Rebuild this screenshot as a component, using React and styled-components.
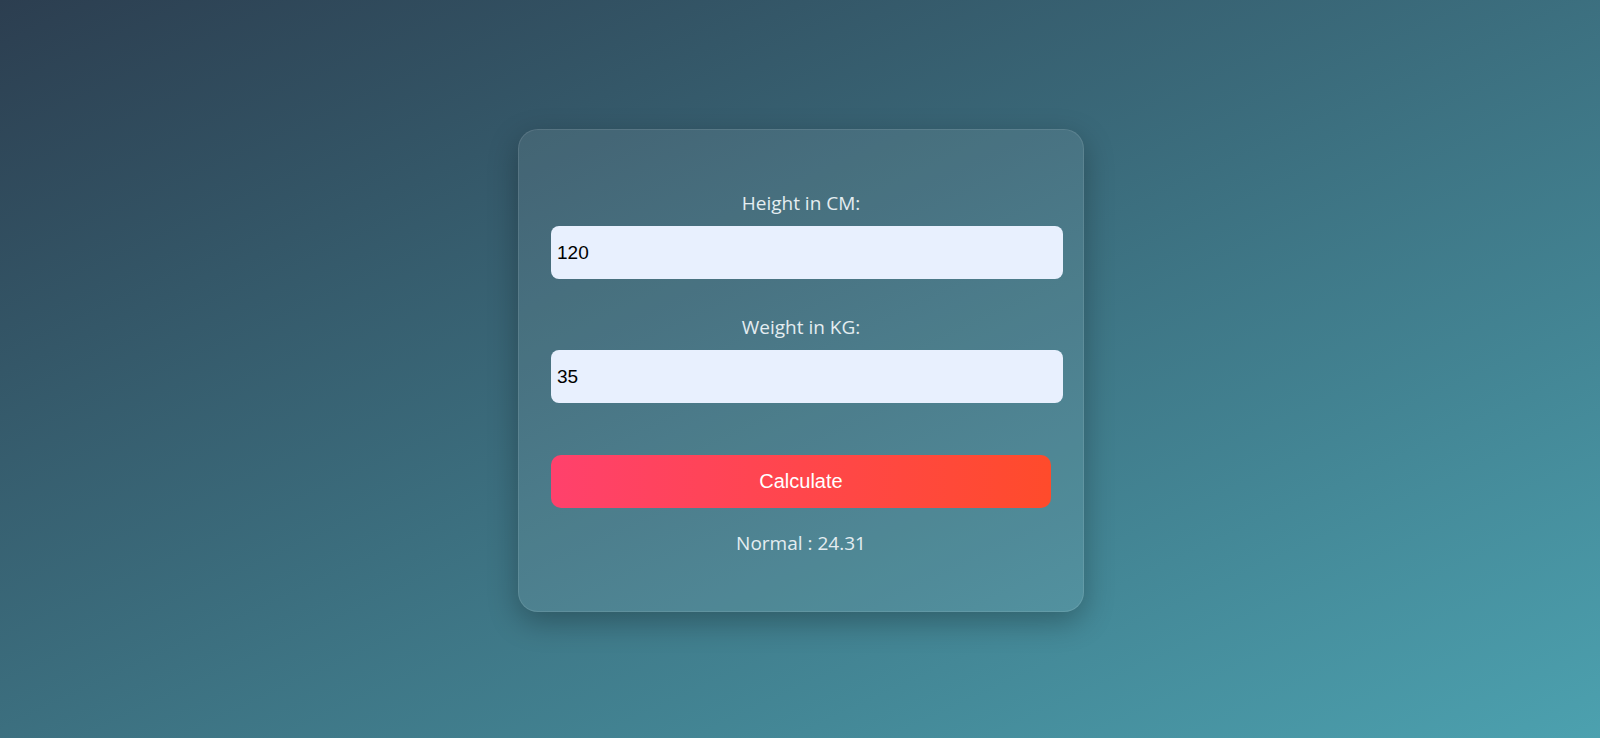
import React, { useState } from 'react';
import styled, { createGlobalStyle } from 'styled-components';

const GlobalStyle = createGlobalStyle`
  html, body {
    margin: 0;
    padding: 0;
    height: 100%;
  }
  body {
    font-family: "Open Sans", "Noto Sans", sans-serif;
  }
`;

function getCategory(bmi) {
  if (bmi < 18.5) return 'Underweight';
  if (bmi < 25) return 'Normal';
  if (bmi < 30) return 'Overweight';
  return 'Obese';
}

function App() {
  const [height, setHeight] = useState('120');
  const [weight, setWeight] = useState('35');
  const [result, setResult] = useState('Normal : 24.31');

  const handleCalculate = () => {
    const h = parseFloat(height) / 100;
    const w = parseFloat(weight);
    if (!h || !w) return;
    const bmi = w / (h * h);
    setResult(`${getCategory(bmi)} : ${bmi.toFixed(2)}`);
  };

  return (
    <>
      <GlobalStyle />
      <Page>
        <Card>
          <FieldLabel htmlFor="height">Height in CM:</FieldLabel>
          <FieldInput
            id="height"
            type="text"
            value={height}
            onChange={(e) => setHeight(e.target.value)}
          />
          <FieldLabel htmlFor="weight" $spaced>
            Weight in KG:
          </FieldLabel>
          <FieldInput
            id="weight"
            type="text"
            value={weight}
            onChange={(e) => setWeight(e.target.value)}
          />
          <CalcButton type="button" onClick={handleCalculate}>
            Calculate
          </CalcButton>
          <Result>{result}</Result>
        </Card>
      </Page>
    </>
  );
}

const Page = styled.div`
  width: 100%;
  min-height: 738px;
  display: flex;
  justify-content: center;
  align-items: flex-start;
  padding: 129px 0 0 2px;
  box-sizing: border-box;
  background: linear-gradient(to bottom right, #2c3e50, #4ca1af);
`;

const Card = styled.div`
  width: 500px;
  padding: 61px 32px 56px;
  display: flex;
  flex-direction: column;
  background: rgba(255, 255, 255, 0.08);
  border: 1px solid rgba(255, 255, 255, 0.1);
  border-radius: 20px;
  box-shadow: 0 10px 30px rgba(0, 0, 0, 0.28);
`;

const FieldLabel = styled.label`
  display: block;
  text-align: center;
  font-size: 19px;
  line-height: 24px;
  color: #e4edf1;
  margin-top: ${(p) => (p.$spaced ? '36px' : '0')};
  margin-bottom: 11px;
`;

const FieldInput = styled.input`
  box-sizing: content-box;
  width: 100%;
  height: 27px;
  padding: 13px 6px;
  border: none;
  border-radius: 8px;
  background: #e8f0fe;
  font-family: "Liberation Sans", Arial, sans-serif;
  font-size: 19px;
  color: #000;
  outline: none;
`;

const CalcButton = styled.button`
  margin-top: 52px;
  height: 53px;
  width: 100%;
  border: none;
  border-radius: 10px;
  background: linear-gradient(to right, #ff416c, #ff4b2b);
  color: #fff;
  font-family: "Liberation Sans", Arial, sans-serif;
  font-size: 20px;
  cursor: pointer;
`;

const Result = styled.div`
  margin-top: 23px;
  text-align: center;
  font-size: 19px;
  line-height: 24px;
  color: #e4edf1;
`;

export default App;
